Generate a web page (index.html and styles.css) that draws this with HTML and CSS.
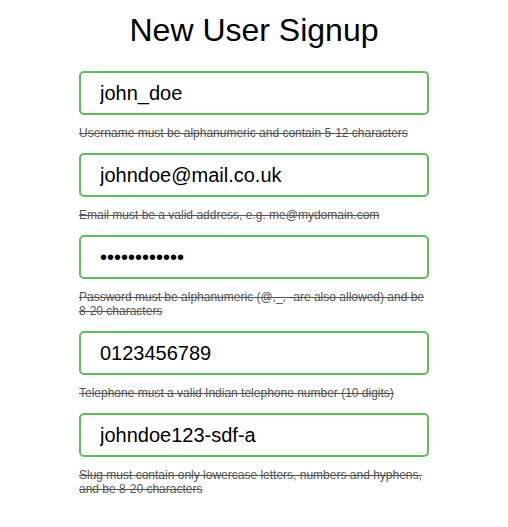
FILE: index.html
```html
<!DOCTYPE html>
<html lang="en">
<head>
<meta charset="utf-8">
<title>New User Signup</title>
<link rel="stylesheet" href="styles.css">
</head>
<body>
<main class="signup">
  <h1 class="title">New User Signup</h1>
  <form class="form">
    <div class="field">
      <input class="input" type="text" value="john_doe">
      <p class="hint">Username must be alphanumeric and contain 5-12 characters</p>
    </div>
    <div class="field">
      <input class="input" type="email" value="johndoe@mail.co.uk">
      <p class="hint">Email must be a valid address, e.g. me@mydomain.com</p>
    </div>
    <div class="field">
      <input class="input" type="password" value="abcdefghijkl">
      <p class="hint">Password must be alphanumeric (@,_,- are also allowed) and be 8-20 characters</p>
    </div>
    <div class="field">
      <input class="input" type="tel" value="0123456789">
      <p class="hint">Telephone must a valid Indian telephone number (10 digits)</p>
    </div>
    <div class="field">
      <input class="input" type="text" value="johndoe123-sdf-a">
      <p class="hint">Slug must contain only lowercase letters, numbers and hyphens, and be 8-20 characters</p>
    </div>
  </form>
</main>
</body>
</html>
```
FILE: styles.css
```css
html, body {
  margin: 0;
  padding: 0;
  background: #fff;
}
body {
  font-family: "Liberation Sans", Arial, sans-serif;
  color: #000;
}
.signup {
  width: 350px;
  margin: 0 auto;
}
.title {
  font-size: 32px;
  font-weight: normal;
  line-height: 37px;
  text-align: center;
  margin: 12px 0 22px;
}
.form {
  display: flex;
  flex-direction: column;
}
.field {
  display: flex;
  flex-direction: column;
}
.input {
  box-sizing: border-box;
  width: 350px;
  height: 44px;
  margin: 0;
  padding: 0 19px;
  border: 2px solid #5cbf5c;
  border-radius: 5px;
  font-family: "Liberation Sans", Arial, sans-serif;
  font-size: 20px;
  color: #000;
  background: #fff;
  outline: none;
}
.hint {
  margin: 11px 0 13px;
  font-size: 12px;
  line-height: 14px;
  color: #555;
  text-decoration: line-through;
}
```
